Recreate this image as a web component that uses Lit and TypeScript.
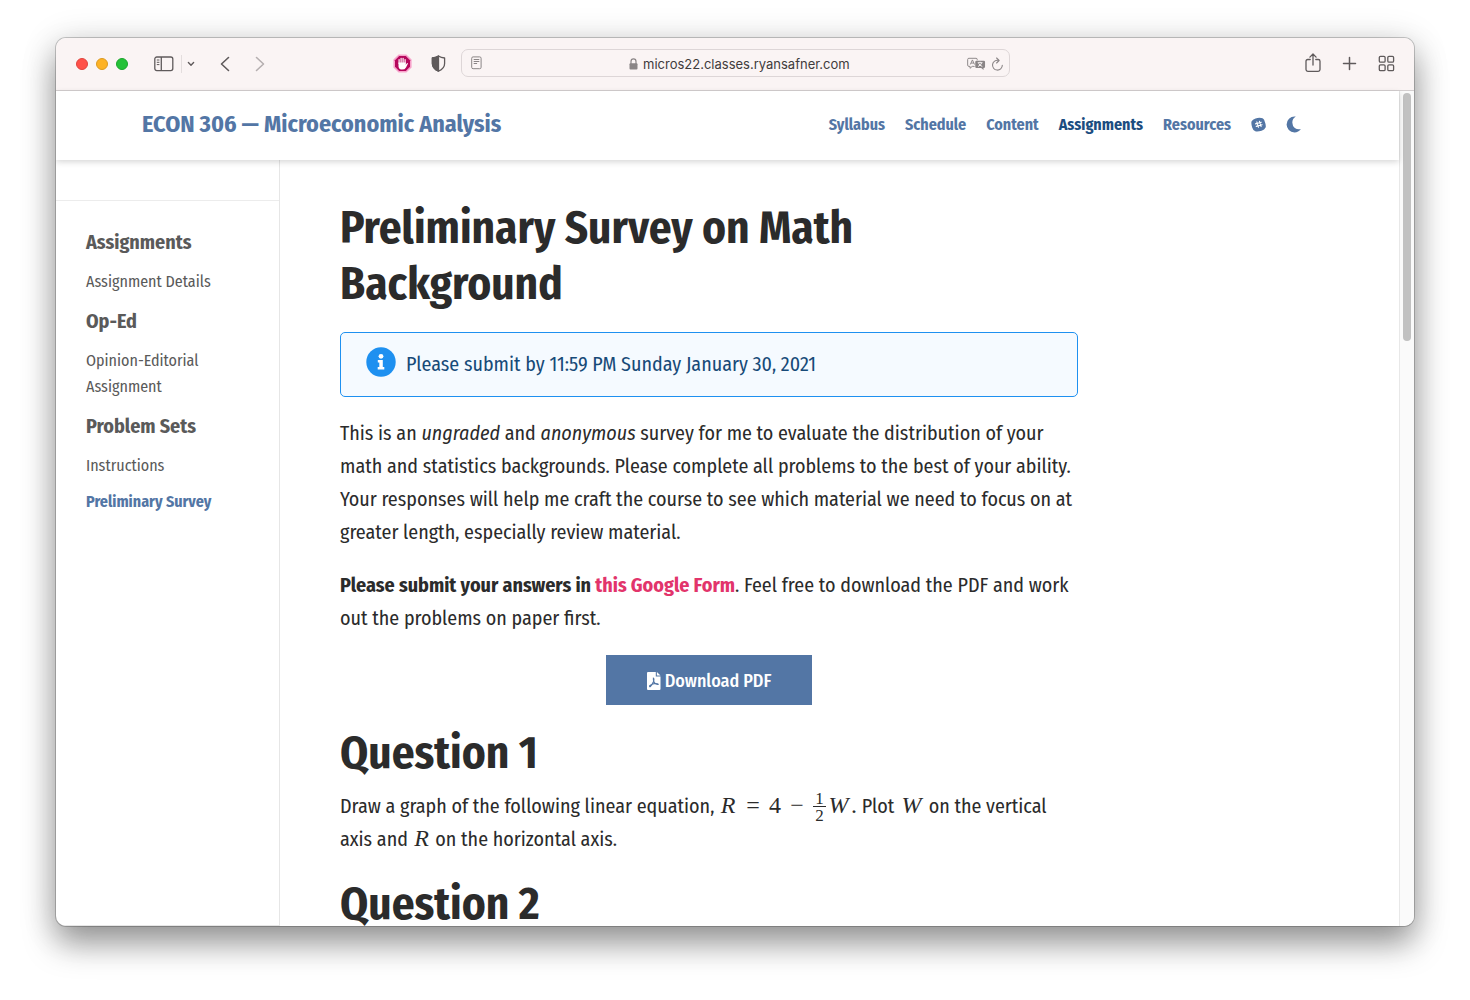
import { LitElement, html, css } from "lit";
import { customElement } from "lit/decorators.js";

const NAV = ["Syllabus", "Schedule", "Content", "Assignments", "Resources"];

const SIDEBAR = [
  { title: "Assignments", links: ["Assignment Details"] },
  { title: "Op-Ed", links: ["Opinion-Editorial Assignment"] },
  { title: "Problem Sets", links: ["Instructions", "Preliminary Survey"] },
];

@customElement("browser-toolbar")
export class BrowserToolbar extends LitElement {
  static styles = css`
    :host {
      display: grid;
      grid-template-columns: 1fr minmax(0, 549px) 1fr;
      align-items: center;
      height: 52px;
      flex: none;
      background: #faf4f4;
      border-bottom: 1px solid #d3cecf;
      color: #5f5a5b;
    }
    button {
      display: block;
      padding: 0;
      border: 0;
      background: none;
      color: inherit;
      line-height: 0;
    }
    svg { display: block; fill: none; stroke: currentColor; }
    .side { display: flex; align-items: center; }
    .left { padding-left: 20px; padding-right: 15px; }
    .right { justify-content: flex-end; gap: 20px; padding: 0 19px 2px 0; }
    .lights { display: flex; gap: 8px; }
    .light { width: 12px; height: 12px; box-sizing: border-box; border-radius: 50%; }
    .close { background: #ff5149; border: 1px solid #e0443e; }
    .min { background: #fdb225; border: 1px solid #dc9a20; }
    .max { background: #24c138; border: 1px solid #1ba52c; }
    .panel { margin-left: 26px; }
    .rule { width: 1px; height: 18px; background: #e3dddd; margin: 0 5px 0 7px; }
    .back { margin-left: 24px; }
    .forward { margin-left: 24px; color: #b5afb0; }
    .extensions { display: flex; align-items: center; gap: 19px; margin-left: auto; padding-bottom: 1px; }
    .address {
      display: flex;
      align-items: center;
      height: 28px;
      box-sizing: border-box;
      padding: 0 5px 0 9px;
      border: 1px solid #ddd6d7;
      border-radius: 7px;
      color: #8a8586;
      margin-top: -2px;
    }
    .location {
      flex: 1;
      display: flex;
      align-items: center;
      justify-content: center;
      gap: 5px;
      padding: 2px 0 0 34px;
    }
    input {
      width: 210px;
      padding: 0;
      border: 0;
      background: none;
      outline: none;
      color: #3f3b3c;
      font: 13px/18px Inter, "Liberation Sans", sans-serif;
    }
    .tools { display: flex; align-items: center; gap: 5px; padding-top: 2px; }
  `;

  render() {
    return html`
      <div class="side left">
        <div class="lights">
          <button class="light close" aria-label="Close"></button>
          <button class="light min" aria-label="Minimize"></button>
          <button class="light max" aria-label="Zoom"></button>
        </div>
        <button class="panel" aria-label="Show sidebar">
          <svg width="20" height="16" viewBox="0 0 20 16" stroke-width="1.3">
            <rect x="0.8" y="1" width="18" height="13.6" rx="2" />
            <path d="M7.3 1v13.6" />
            <path d="M2.8 4h2.6M2.8 6.3h2.6M2.8 8.6h2.6" stroke-width="1" />
          </svg>
        </button>
        <span class="rule"></span>
        <button aria-label="Sidebar options">
          <svg width="8" height="6" viewBox="0 0 8 6" stroke-width="1.4" stroke-linecap="round" stroke-linejoin="round">
            <path d="M1.4 1.6L4 4.2 6.6 1.6" />
          </svg>
        </button>
        <button class="back" aria-label="Back">
          <svg width="11" height="16" viewBox="0 0 11 16" stroke-width="1.6" stroke-linecap="round" stroke-linejoin="round">
            <path d="M9.5 1.5L2.5 8l7 6.5" />
          </svg>
        </button>
        <button class="forward" aria-label="Forward">
          <svg width="11" height="16" viewBox="0 0 11 16" stroke-width="1.6" stroke-linecap="round" stroke-linejoin="round">
            <path d="M2.5 1.5L9.5 8l-7 6.5" />
          </svg>
        </button>
        <div class="extensions">
          <button aria-label="Content blocker">
            <svg width="19" height="19" viewBox="0 0 19 19" stroke="none">
              <g stroke="none">
                <path d="M5.6 0.4h7.800l5.200 5.200v7.800l-5.200 5.200H5.600L0.400 13.400V5.600z" fill="#f7a3cb" />
                <path d="M6.2 2h6.6L17 6.200v6.600L12.800 17H6.200L2 12.800V6.200z" fill="#b5075c" />
                <path d="M5.500 8.500h7.200v2.300l1.300-1.600q.9-.4 1 .3l-2 3.900q-1.200 2.200-3.700 2.200-3.200 0-3.800-3.200z" fill="#fff" />
              </g>
              <path d="M6.100 9.500V5.600M8.100 9V4.300M10.100 9V4.300M12.100 9.500V5.600" stroke="#fff" stroke-width="1.200" stroke-linecap="round" />
            </svg>
          </button>
          <button aria-label="Privacy report">
            <svg width="15" height="17" viewBox="0 0 15 17" stroke-width="1.3" stroke-linejoin="round">
              <path d="M7.500 1Q10 2.700 13.600 3v5.500q0 5-6.100 7.600-6.100-2.600-6.100-7.600V3Q5 2.700 7.500 1z" />
              <path d="M7.500 1v15.100q-6.100-2.600-6.100-7.600V3Q5 2.700 7.500 1z" fill="currentColor" />
            </svg>
          </button>
        </div>
      </div>

      <div class="address">
        <button aria-label="Reader">
          <svg width="11" height="14" viewBox="0 0 11 14" stroke-width="1">
            <rect x="0.700" y="0.900" width="9.400" height="11.800" rx="1.400" />
            <path d="M2.700 3.500h5.600M2.700 5.500h5.600M2.700 7.500h3.400" />
          </svg>
        </button>
        <div class="location">
          <svg width="9" height="12" viewBox="0 0 9 12" stroke-width="1.200" aria-hidden="true">
            <path d="M2 6V3.500Q2 .8 4.500 .8T7 3.500V6" />
            <rect x="0.500" y="5.200" width="8" height="6.300" rx="1" fill="currentColor" stroke="none" />
          </svg>
          <input aria-label="Address" value="micros22.classes.ryansafner.com" />
        </div>
        <div class="tools">
          <button aria-label="Translate">
            <svg width="19" height="14" viewBox="0 0 20 14" stroke-width="1">
              <path d="M8 9.500H5.500L3.200 11.500V9.500H2Q.7 9.500.7 8.200V2.300Q.7 1 2 1h7.500q1.300 0 1.300 1.300V3" />
              <path d="M3.500 7.500L5.700 2.700 7.900 7.500M4.300 6h2.800" />
              <path d="M10 3.500h7.700q1.300 0 1.300 1.300v5q0 1.300-1.300 1.300h-.3v2.200l-2.400-2.200h-5q-1.300 0-1.300-1.300v-5q0-1.300 1.300-1.300z" fill="currentColor" stroke="none" />
              <path d="M11.300 5.600h5M13.800 4.600v1M15.500 5.800q-.8 2.500-3.900 3.800M12.200 6.300q1 2.200 3.900 3.300" stroke="#faf4f4" />
            </svg>
          </button>
          <button aria-label="Reload">
            <svg width="13" height="14" viewBox="0 0 13 14" stroke-width="1.100" stroke-linecap="round" stroke-linejoin="round">
              <path d="M7.500 3.400A4.900 4.900 0 1 0 11.300 8.200" />
              <path d="M5.600 1L8.100 3.500 5.600 6" />
            </svg>
          </button>
        </div>
      </div>

      <div class="side right">
        <button aria-label="Share">
          <svg width="17" height="20" viewBox="0 0 17 20" stroke-width="1.300" stroke-linecap="round" stroke-linejoin="round">
            <path d="M5.200 6.500H2.800Q1 6.500 1 8.300v8.200q0 1.800 1.800 1.800h10.400q1.800 0 1.800-1.800V8.300q0-1.800-1.800-1.800h-2.400" />
            <path d="M8 12V1.200M4.900 4.100L8 1l3.100 3.100" />
          </svg>
        </button>
        <button aria-label="New tab">
          <svg width="16" height="15" viewBox="0 0 16 15" stroke-width="1.500" stroke-linecap="round">
            <path d="M7.500 1.500v12M1.500 7.500h12" />
          </svg>
        </button>
        <button aria-label="Tab overview">
          <svg width="17" height="17" viewBox="0 0 17 17" stroke-width="1.300">
            <rect x="1.300" y="1.300" width="5.800" height="5.800" rx="1.200" />
            <rect x="9.800" y="1.300" width="5.800" height="5.800" rx="1.200" />
            <rect x="1.300" y="9.800" width="5.800" height="5.800" rx="1.200" />
            <rect x="9.800" y="9.800" width="5.800" height="5.800" rx="1.200" />
          </svg>
        </button>
      </div>
    `;
  }
}

@customElement("app-root")
export class AppRoot extends LitElement {
  static styles = css`
    :host {
      display: block;
      box-sizing: border-box;
      height: 100vh;
      padding: 38px 56px 74px;
      overflow: hidden;
      background: #fff;
      color: #2b2b2b;
      font: 20px/33px "Fira Sans Condensed", "Roboto Condensed", sans-serif;
    }
    a { color: inherit; text-decoration: none; }
    svg { display: block; }
    h1, h2, h3, p, ul { margin: 0; padding: 0; }
    .window {
      display: flex;
      flex-direction: column;
      height: 100%;
      border-radius: 10px;
      overflow: hidden;
      background: #fff;
      box-shadow: 0 0 0 1px rgba(0, 0, 0, 0.2), 0 18px 32px rgba(0, 0, 0, 0.36), 0 4px 36px rgba(0, 0, 0, 0.16);
    }
    .viewport { flex: 1; min-height: 0; display: flex; }
    .page { flex: 1; min-width: 0; display: flex; flex-direction: column; }
    .scrollbar {
      flex: none;
      width: 14px;
      background: #fafafa;
      border-left: 1px solid #e8e8e8;
      padding-top: 2px;
    }
    .thumb { width: 8px; height: calc(30% - 2px); margin: 0 auto; border-radius: 4px; background: #c1c1c1; }
    .site-header {
      position: relative;
      z-index: 1;
      flex: none;
      display: flex;
      align-items: center;
      justify-content: space-between;
      height: 67px;
      padding: 0 97px 2px 86px;
      background: #fff;
      box-shadow: 0 2px 6px rgba(0, 0, 0, 0.16);
      color: #5376a5;
      font-weight: 700;
    }
    .brand { font-size: 24px; }
    nav { display: flex; align-items: center; gap: 20px; font-size: 16px; }
    nav .current { color: #1c4d80; }
    nav button { padding: 0; border: 0; background: none; color: inherit; }
    .columns { flex: 1; min-height: 0; display: flex; }
    .sidebar {
      flex: none;
      width: 223px;
      border-right: 1px solid #e6e6e6;
      border-bottom: 1px solid #e6e6e6;
      color: #5a5a5a;
    }
    .search { height: 40px; border-bottom: 1px solid #ececec; }
    .toc { display: flex; flex-direction: column; gap: 10px; padding: 25px 30px; }
    .toc h3 { font-size: 20px; line-height: 33px; font-weight: 700; }
    .toc a { font-size: 16px; line-height: 26px; }
    .toc .current { color: #5376a5; font-weight: 700; }
    main { flex: 1; min-width: 0; padding: 40px 60px 0; overflow: hidden; }
    article { max-width: 738px; }
    h1, h2 { font-size: 45px; line-height: 56px; font-weight: 700; }
    h1 { margin-bottom: 20px; }
    h2 { margin: 20px 0 9px; }
    p { margin-bottom: 20px; }
    .note {
      display: flex;
      align-items: center;
      gap: 10px;
      box-sizing: border-box;
      height: 65px;
      padding: 0 25px;
      margin-bottom: 20px;
      border: 1px solid #1e90f0;
      border-radius: 5px;
      background: #f5faff;
      color: #174a78;
    }
    .note svg { margin-bottom: 6px; }
    .pink { color: #e2346b; font-weight: 700; }
    .download {
      display: flex;
      align-items: center;
      justify-content: center;
      gap: 4px;
      box-sizing: border-box;
      width: 206px;
      height: 50px;
      padding-top: 2px;
      margin: 0 auto;
      background: #5376a5;
      color: #fff;
      font-size: 18px;
      font-weight: 500;
    }
    .math {
      font-family: "Liberation Serif", serif;
      font-size: 24px;
      line-height: 24px;
      white-space: nowrap;
    }
    .math i, .op { display: inline-block; text-align: center; }
    .r { width: 18px; }
    .w { width: 25px; }
    .op { width: 32px; }
    .frac {
      display: inline-flex;
      flex-direction: column;
      vertical-align: middle;
      width: 13px;
      font-size: 17px;
      line-height: 15px;
      text-align: center;
    }
    .frac b { font-weight: 400; }
    .frac b + b { border-top: 1px solid currentColor; padding-top: 1px; }
  `;

  render() {
    return html`
      <div class="window">
        <browser-toolbar></browser-toolbar>
        <div class="viewport">
          <div class="page">
            <header class="site-header">
              <a class="brand" href="#">ECON 306 — Microeconomic Analysis</a>
              <nav>
                ${NAV.map((n) => html`<a href="#" class=${n === "Assignments" ? "current" : ""}>${n}</a>`)}
                <a href="#" aria-label="Slack">
                  <svg width="15" height="15" viewBox="0 0 15 15">
                    <path d="M10.300 1Q13 1 13.700 4.600 15.300 8.500 14.600 10.600 13.500 12.800 10.600 13.700 6.500 14.900 4.300 14.200 2 13.500 1.200 10.500 0 6.700.5 4.500 1.500 2.200 4.500 1.400 8 .3 10.300 1z" fill="#5376a5" />
                    <path d="M5.800 4.900l1.700 5.400M8.400 4.200l1.700 5.400M4.500 6.900l5.800-1.700M5.200 9.400l5.900-1.700" stroke="#fff" stroke-width="1.100" stroke-linecap="round" />
                  </svg>
                </a>
                <button aria-label="Toggle dark mode">
                  <svg width="16" height="17" viewBox="0 0 16 17">
                    <path d="M9.800.6Q6.300 2.600 6.300 6.600q0 3.400 2.500 5.300 2.600 1.900 6.100 1.100-2.400 3.400-6.400 3.400Q5 16.400 2.800 14T.6 8.500Q.6 5 3 2.700 5.800.1 9.800.6z" fill="#5376a5" />
                  </svg>
                </button>
              </nav>
            </header>
            <div class="columns">
              <aside class="sidebar">
                <div class="search"></div>
                <div class="toc">
                  ${SIDEBAR.map(
                    (s) => html`<h3>${s.title}</h3>
                      ${s.links.map((l) => html`<a href="#" class=${l === "Preliminary Survey" ? "current" : ""}>${l}</a>`)}`
                  )}
                </div>
              </aside>
              <main>
                <article>
                  <h1>Preliminary Survey on Math Background</h1>
                  <div class="note">
                    <svg width="30" height="30" viewBox="0 0 30 30" aria-hidden="true">
                      <circle cx="15" cy="15" r="14.700" fill="#1e90f0" />
                      <circle cx="15" cy="9.300" r="2.400" fill="#fff" />
                      <path d="M11.800 13h5v7h1.500v2.500h-6.600V20h1.600v-4.500h-1.500z" fill="#fff" />
                    </svg>
                    <span>Please submit by 11:59 PM Sunday January 30, 2021</span>
                  </div>
                  <p>
                    This is an <em>ungraded</em> and <em>anonymous</em> survey for me to evaluate the distribution of your
                    math and statistics backgrounds. Please complete all problems to the best of your ability. Your
                    responses will help me craft the course to see which material we need to focus on at greater length,
                    especially review material.
                  </p>
                  <p>
                    <strong>Please submit your answers in <a class="pink" href="#">this Google Form</a></strong>. Feel
                    free to download the PDF and work out the problems on paper first.
                  </p>
                  <a class="download" href="#">
                    <svg width="14" height="18" viewBox="0 0 14 18" aria-hidden="true">
                      <path d="M1 0h7.800v4.600h4.700V17q0 1-1 1H1q-1 0-1-1V1q0-1 1-1z" fill="#fff" />
                      <path d="M9.900 0L13.500 3.600H9.900z" fill="#fff" />
                      <path d="M6.400 6.200Q6 8.500 7.300 10.700 9 12.800 11.200 12.500 11.400 11.300 8 11.500 4.700 12 2.700 13.600 2.200 15 3.500 14.500 5.200 12.600 6.400 9.800 7.500 6.800 6.400 6.200z" fill="none" stroke="#5376a5" stroke-width="1.100" />
                    </svg>
                    Download PDF
                  </a>
                  <h2>Question 1</h2>
                  <p>
                    Draw a graph of the following linear equation,
                    <span class="math"
                      ><i class="r">R</i><span class="op">=</span>4<span class="op">−</span
                      ><span class="frac"><b>1</b><b>2</b></span
                      ><i class="w">W</i>.</span
                    >
                    Plot <span class="math"><i class="w">W</i></span> on the vertical axis and
                    <span class="math"><i class="r">R</i></span> on the horizontal axis.
                  </p>
                  <h2>Question 2</h2>
                </article>
              </main>
            </div>
          </div>
          <div class="scrollbar"><div class="thumb"></div></div>
        </div>
      </div>
    `;
  }
}
